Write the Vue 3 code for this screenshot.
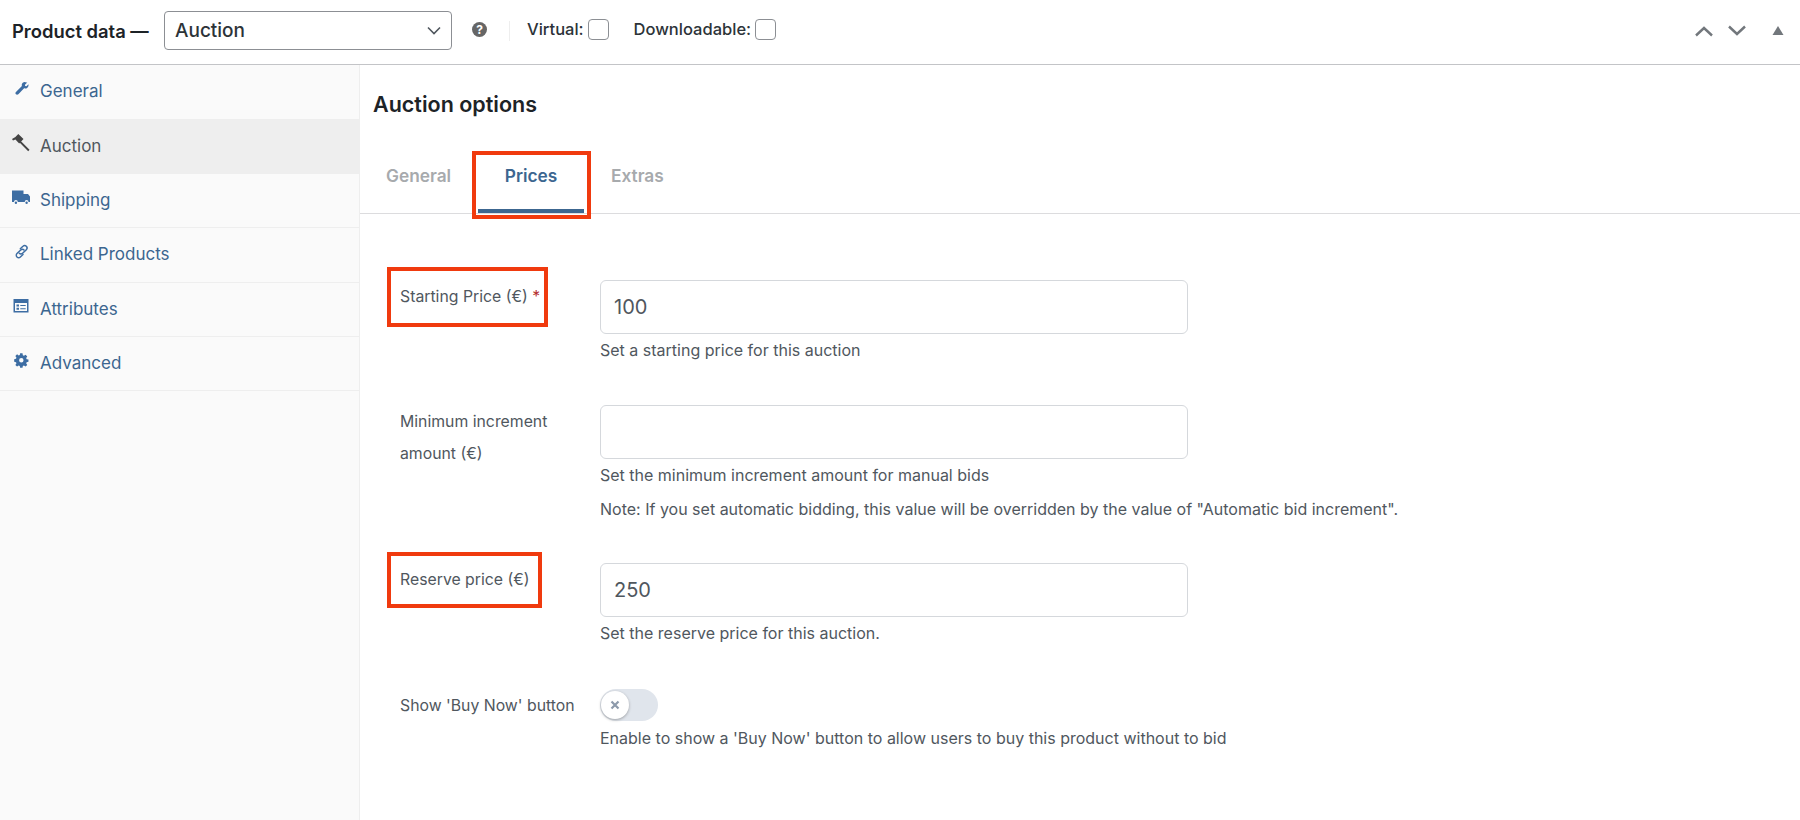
<script setup>
const navItems = [
  { label: 'General', icon: 'wrench' },
  { label: 'Auction', icon: 'gavel', active: true },
  { label: 'Shipping', icon: 'truck' },
  { label: 'Linked Products', icon: 'link' },
  { label: 'Attributes', icon: 'attr' },
  { label: 'Advanced', icon: 'gear' }
]
</script>

<template>
  <div class="page">
    <header class="topbar">
      <strong class="title">Product data —</strong>
      <select class="type-select">
        <option>Auction</option>
      </select>
      <span class="help">?</span>
      <span class="sep"></span>
      <label class="check">Virtual:<input type="checkbox" /></label>
      <label class="check dl">Downloadable:<input type="checkbox" /></label>
      <div class="actions">
        <svg width="20" height="12" viewBox="0 0 20 12"><path d="M2 10.500 10 3l8 7.500" fill="none" stroke="#72777c" stroke-width="2.400" /></svg>
        <svg width="20" height="12" viewBox="0 0 20 12"><path d="M2 1.500 10 9l8-7.500" fill="none" stroke="#72777c" stroke-width="2.400" /></svg>
        <svg class="tri" width="12" height="9" viewBox="0 0 12 9"><path d="M6 0l5.500 9H.5z" fill="#72777c" /></svg>
      </div>
    </header>

    <div class="body">
      <nav class="side">
        <a v-for="item in navItems" :key="item.label" class="nav-item" :class="{ active: item.active }">
          <svg class="nav-icon" width="18" height="18" viewBox="0 0 18 18" fill="currentColor">
            <path v-if="item.icon === 'wrench'" transform="translate(2 1) scale(.85)" d="M15.600 1.800 12.900 4.400l.2 1.500 1.500.3 2.400-2.500c.3 1.700-.1 3.100-1.300 4.100-1.100 1-2.400 1.200-3.800.8l-6.800 7c-.9.800-2.100.7-2.800 0-.8-.8-.8-1.900 0-2.800l7-6.900c-.4-1.500-.1-2.800 1-3.800 1.200-1.100 2.800-1.200 4.300-.3z" />
            <template v-else-if="item.icon === 'gavel'">
              <path d="M6.300 0 11.500 5.100 7.200 9.400 3.400 5.600 1 6.500 0 4.900 3.400 3.100z" />
              <path d="M8.500 6.800 17.500 15.800 16.200 17.200 7.100 8.100z" />
            </template>
            <template v-else-if="item.icon === 'truck'">
              <path d="M0 1.500h11.500V5H16l2 2.500V13h-1.500a1.900 1.900 0 0 0-3.800 0H5.800A1.900 1.900 0 0 0 2 13H0z" />
              <circle cx="3.900" cy="13.800" r="1.200" /><circle cx="14.600" cy="13.800" r="1.200" />
            </template>
            <g v-else-if="item.icon === 'link'" transform="translate(2 1) scale(.85)" fill="none" stroke="currentColor" stroke-width="1.700" stroke-linecap="round">
              <path d="M7.400 5.600 10.500 2.700a2.800 2.800 0 0 1 4 4l-4.400 4.300a2.700 2.700 0 0 1-3.900 0" />
              <path d="M10.600 12.400 7.500 15.300a2.800 2.800 0 0 1-4-4L7.900 7a2.700 2.700 0 0 1 3.900 0" />
            </g>
            <path v-else-if="item.icon === 'attr'" fill-rule="evenodd" d="M1.500 2h15v13.500h-15zM3 6v8h12V6zM4.500 7.500H7v2H4.500zm0 3.200H7v2H4.500zM8.300 8h5.400v1H8.300zm0 3.200h5.400v1H8.300z" />
            <path v-else fill-rule="evenodd" transform="translate(1.500 1.500) scale(.85)" d="M7.800 1h2.800l.4 2.200 1.300.6 1.900-1.200 2 2-1.300 1.900.6 1.300 2.100.4v2.800l-2.100.4-.6 1.300 1.300 1.900-2 2-1.900-1.300-1.300.6-.4 2.100H7.800l-.4-2.100-1.300-.6-1.900 1.300-2-2 1.300-1.900-.6-1.300-2.100-.4V7.800l2.100-.4.600-1.300-1.300-1.900 2-2 1.900 1.200 1.300-.6zM9.200 6.600a2.600 2.600 0 1 0 0 5.200 2.600 2.600 0 0 0 0-5.200z" />
          </svg>
          <span>{{ item.label }}</span>
        </a>
      </nav>

      <main class="main">
        <h2 class="heading">Auction options</h2>
        <div class="tabs">
          <span class="tab">General</span>
          <span class="tab current">Prices</span>
          <span class="tab">Extras</span>
        </div>

        <section class="form">
          <div class="row">
            <div class="label"><span class="marked-label first">Starting Price (€) <i>*</i></span></div>
            <div class="field">
              <input class="text" value="100" />
              <p class="hint">Set a starting price for this auction</p>
            </div>
          </div>
          <div class="row r2">
            <div class="label">Minimum increment amount (€)</div>
            <div class="field">
              <input class="text" />
              <p class="hint">Set the minimum increment amount for manual bids</p>
              <p class="hint note">Note: If you set automatic bidding, this value will be overridden by the value of "Automatic bid increment".</p>
            </div>
          </div>
          <div class="row r3">
            <div class="label"><span class="marked-label">Reserve price (€)</span></div>
            <div class="field">
              <input class="text" value="250" />
              <p class="hint">Set the reserve price for this auction.</p>
            </div>
          </div>
          <div class="row r4">
            <div class="label">Show 'Buy Now' button</div>
            <div class="field">
              <div class="toggle">
                <span class="knob">
                  <svg width="10" height="10" viewBox="0 0 10 10"><path d="M1.500 1.500l7 7m0-7l-7 7" stroke="#8d9aab" stroke-width="2.200" /></svg>
                </span>
              </div>
              <p class="hint">Enable to show a 'Buy Now' button to allow users to buy this product without to bid</p>
            </div>
          </div>
        </section>
      </main>
    </div>
  </div>
</template>

<style>
html, body { background: #fff; }
</style>

<style scoped>
.page {
  width: 1800px;
  height: 820px;
  overflow: hidden;
  display: flex;
  flex-direction: column;
  font-family: Inter, "Liberation Sans", sans-serif;
  color: #3c434a;
  background: #fff;
}
.topbar {
  height: 64px;
  flex: none;
  display: flex;
  align-items: center;
  padding-left: 12px;
  border-bottom: 1px solid #c3c4c7;
}
.title { font-size: 18.400px; font-weight: 600; color: #1d2327; width: 152px; margin-top: -3px; white-space: nowrap; }
.type-select {
  width: 288px;
  height: 39px;
  margin-top: -3px;
  padding: 0 10px;
  appearance: none;
  font: 500 19px Inter, sans-serif;
  color: #2c3338;
  background: #fff url("data:image/svg+xml,%3Csvg xmlns='http://www.w3.org/2000/svg' width='14' height='9' viewBox='0 0 14 9'%3E%3Cpath d='M1 1.500l6 6 6-6' fill='none' stroke='%2350575e' stroke-width='1.600'/%3E%3C/svg%3E") no-repeat right 10px center;
  border: 1px solid #8c8f94;
  border-radius: 4px;
}
.help {
  width: 15px; height: 15px;
  margin-left: 20px; margin-top: -6px;
  border-radius: 50%;
  background: #666;
  color: #fff;
  font: 700 12px/15px Inter, sans-serif;
  text-align: center;
}
.sep { width: 1px; height: 20px; background: #eee; margin: -2px 17px 0 22px; }
.check {
  display: flex;
  align-items: center;
  font-size: 16.500px;
  font-weight: 500;
  color: #2c3338;
  margin-top: -6px;
}
.check input {
  appearance: none;
  width: 21px; height: 21px;
  margin: 0 0 0 4px;
  background: #fff;
  border: 1px solid #8c8f94;
  border-radius: 4px;
}
.dl { margin-left: 25px; }
.actions {
  margin-left: auto;
  display: flex;
  align-items: center;
  padding-right: 16px;
  gap: 13px;
  margin-top: -3px;
}
.tri { margin-left: 12px; }
.body { flex: 1; display: flex; min-height: 0; }
.side {
  width: 360px;
  flex: none;
  background: #fafafa;
  border-right: 1px solid #eee;
  box-sizing: border-box;
}
.nav-item {
  height: 54.200px;
  box-sizing: border-box;
  display: flex;
  align-items: center;
  padding: 0 12px 1px;
  gap: 10px;
  font-size: 17px;
  color: #3c6690;
  border-bottom: 1px solid #eee;
}
.nav-item:first-child, .nav-item.active { border-bottom-color: transparent; }
.nav-item.active { background: #eee; color: #50575e; height: 55px; }
.nav-icon { flex: none; margin-top: -5px; color: #3d6da3; }
.nav-item.active .nav-icon { color: #444; }
.main { flex: 1; min-width: 0; }
.heading {
  margin: 0;
  padding: 25px 0 0 13px;
  height: 50px;
  font-size: 21.500px;
  line-height: 28px;
  font-weight: 600;
  color: #1d2327;
}
.tabs {
  margin-top: 8px;
  height: 65px;
  display: flex;
  align-items: flex-start;
  border-bottom: 1px solid #dcdcde;
  padding-left: 26px;
}
.tab {
  position: relative;
  padding-top: 16px;
  height: 49px;
  font-size: 17.300px;
  line-height: 24px;
  font-weight: 600;
  color: #a7aaad;
}
.tab:first-child { width: 92px; }
.tab:nth-child(2) { width: 106px; color: #3c6690; text-align: center; }
.tab:last-child { margin-left: 27px; }
.tab.current::after {
  content: "";
  position: absolute;
  left: 0; right: 0; bottom: 0;
  height: 4px;
  background: #3c6690;
}
.tab.current::before {
  content: "";
  position: absolute;
  left: -6px; right: -7px; top: 3px; bottom: -6px;
  border: 4px solid #f03a0e;
}
.form { padding: 66px 0 0 40px; }
.row { display: grid; grid-template-columns: 200px 1fr; }
.r2 { margin-top: 45px; }
.r3 { margin-top: 44px; }
.r4 { margin-top: 46px; }
.label {
  padding-top: 1px;
  font-size: 15.800px;
  line-height: 32px;
  color: #50575e;
}
.r2 .label { width: 175px; }
.marked-label { position: relative; display: inline-block; }
.marked-label::after {
  content: "";
  position: absolute;
  left: -13px; top: -12px; bottom: -12px; right: -12px;
  border: 4px solid #f03a0e;
}
.marked-label.first::after { right: -8px; top: -14px; bottom: -14px; }
.marked-label i { color: #b32d2e; font-style: normal; }
.text {
  display: block;
  width: 588px;
  height: 54px;
  box-sizing: border-box;
  padding: 0 13px;
  font: 400 20px Inter, sans-serif;
  color: #50575e;
  background: #fff;
  border: 1px solid #d5d8dc;
  border-radius: 6px;
  outline: none;
}
.hint {
  margin: 6px 0 0;
  font-size: 16px;
  line-height: 20px;
  color: #50575e;
}
.note { margin-top: 14px; }
.toggle {
  width: 58px; height: 32px;
  border-radius: 16px;
  background: #e0e5ec;
  display: flex;
  align-items: center;
}
.knob {
  width: 28px; height: 28px;
  border-radius: 50%;
  background: #fff;
  box-shadow: 0 1px 3px rgba(0,0,0,.3);
  display: flex;
  align-items: center;
  justify-content: center;
  margin-left: 1px;
}
.r4 .hint { margin-top: 7px; }
</style>
